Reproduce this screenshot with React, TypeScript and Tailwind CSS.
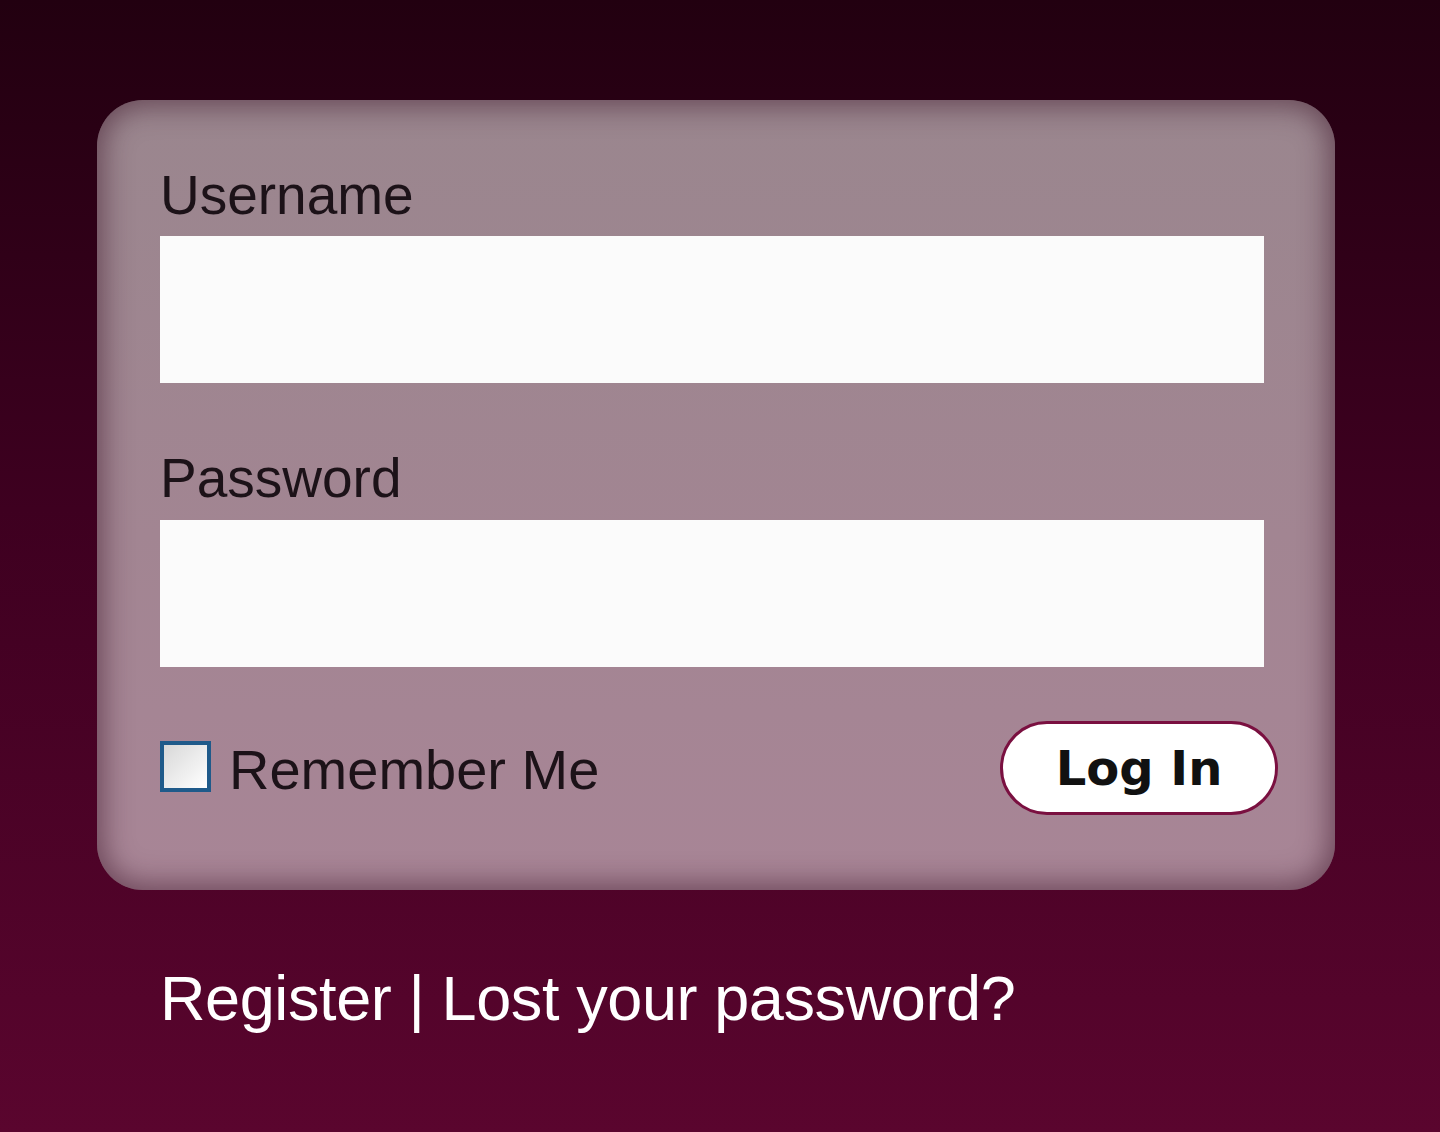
import { useState } from "react";

const App = () => {
  const [remember, setRemember] = useState(false);

  return (
    <div className="w-[1440px] h-[1132px] overflow-hidden bg-[linear-gradient(180deg,#220010_0%,#3e0020_45%,#5a052e_100%)] font-['Liberation_Sans',Arial,sans-serif]">
      <div className="pt-[100px] pl-[97px]">
        {/* Login card */}
        <form
          className="w-[1238px] h-[790px] rounded-[46px] bg-[linear-gradient(180deg,#9a868e_0%,#a28592_55%,#a88596_100%)] shadow-[inset_0_0_28px_6px_rgba(60,20,40,0.55)] pt-[64px] pl-[63px] pr-[71px]"
          onSubmit={(e) => e.preventDefault()}
        >
          <label className="block text-[55px] leading-[62px] text-[#1c1218]">Username</label>
          <input
            type="text"
            className="block mt-[10px] w-[1104px] h-[147px] bg-[#fbfbfb] outline-none px-4 text-[54px]"
          />

          <label className="block mt-[64px] text-[55px] leading-[62px] text-[#1c1218]">Password</label>
          <input
            type="password"
            className="block mt-[11px] w-[1104px] h-[147px] bg-[#fbfbfb] outline-none px-4 text-[54px]"
          />

          {/* Remember + submit */}
          <div className="mt-[54px] h-[94px] flex items-center justify-between w-[1118px]">
            <label className="flex items-center gap-[18px] cursor-pointer">
              <span
                className="w-[51px] h-[51px] mt-[-4px] border-[4px] border-[#1f5a8a] bg-[linear-gradient(135deg,#d8d8d8,#ffffff)]"
                onClick={() => setRemember(!remember)}
              >
                {remember && <span className="block text-center text-[36px] leading-[42px]">✓</span>}
              </span>
              <span className="text-[56px] leading-[62px] text-[#1c1218] mt-[4px]">Remember Me</span>
            </label>
            <button
              type="submit"
              className="w-[278px] h-[94px] rounded-full border-[3px] border-[#7a1040] bg-white font-['DejaVu_Sans',Verdana,sans-serif] font-bold text-[48px] text-[#111]"
            >
              Log In
            </button>
          </div>
        </form>

        {/* Links */}
        <div className="pl-[63px] mt-[72px] text-[63px] leading-[72px] text-white tracking-[-0.4px]">
          <a href="#">Register</a> | <a href="#">Lost your password?</a>
        </div>
      </div>
    </div>
  );
};

export default App;
